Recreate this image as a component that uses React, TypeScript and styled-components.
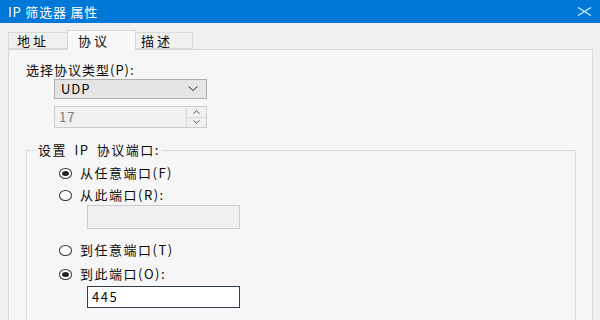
import React from "react";
import styled, { createGlobalStyle } from "styled-components";

const Global = createGlobalStyle`
  html, body { margin: 0; padding: 0; background: #f0f0f0; }
  body { font-family: "Noto Sans CJK SC", "Noto Sans", sans-serif; }
`;

const Window = styled.div`
  width: 600px;
  height: 320px;
  overflow: hidden;
  background: #f0f0f0;
  display: flex;
  flex-direction: column;
  font-size: 13px;
  line-height: 16px;
  color: #0a0a0a;
`;

const TitleBar = styled.div`
  flex: none;
  height: 23px;
  background: #0078d7;
  display: flex;
  align-items: center;
  justify-content: space-between;
  padding: 0 8px 0 8px;
  color: #ffffff;
`;

const Title = styled.span`
  letter-spacing: 0.8px;
`;

const CloseIcon = styled.svg`
  display: block;
`;

const Body = styled.div`
  flex: 1;
  min-height: 0;
  display: flex;
  flex-direction: column;
  padding: 7px 7px 0 8px;
`;

const TabStrip = styled.div`
  display: flex;
  align-items: flex-end;
  height: 19px;
`;

const Tab = styled.div<{ $active?: boolean; $w: number; $pad: number }>`
  position: relative;
  z-index: ${(p) => (p.$active ? 1 : 0)};
  box-sizing: border-box;
  width: ${(p) => p.$w}px;
  height: ${(p) => (p.$active ? 20 : 17)}px;
  margin-bottom: ${(p) => (p.$active ? -1 : 0)}px;
  margin-left: -1px;
  padding-left: ${(p) => p.$pad}px;
  border: 1px solid #d9d9d9;
  border-bottom: ${(p) => (p.$active ? "none" : "1px solid #d9d9d9")};
  background: ${(p) => (p.$active ? "#f8f8f8" : "#f0f0f0")};
  display: flex;
  align-items: center;
  letter-spacing: 3px;
  &:first-child { margin-left: 0; }
`;

const Panel = styled.div`
  flex: 1;
  box-sizing: border-box;
  border: 1px solid #d9d9d9;
  border-bottom: none;
  background: #f6f6f6;
  padding: 12px 0 0 17px;
  display: flex;
  flex-direction: column;
  align-items: flex-start;
`;

const Label = styled.span`
  letter-spacing: 1px;
`;

const Combo = styled.div`
  box-sizing: border-box;
  margin: 1px 0 0 28px;
  width: 153px;
  height: 20px;
  border: 1px solid #adadad;
  background: #e5e5e5;
  display: flex;
  align-items: center;
  justify-content: space-between;
  padding: 0 8px 0 6px;
  letter-spacing: 1px;
`;

const Spin = styled.div`
  box-sizing: border-box;
  margin: 7px 0 0 28px;
  width: 153px;
  height: 22px;
  border: 1px solid #cccccc;
  background: #f0f0f0;
  display: flex;
`;

const SpinValue = styled.span`
  flex: 1;
  padding-left: 4px;
  line-height: 20px;
  color: #7a7a7a;
  letter-spacing: 1px;
`;

const SpinButtons = styled.div`
  width: 19px;
  border-left: 1px solid #dadada;
  display: flex;
  flex-direction: column;
`;

const SpinBtn = styled.div`
  flex: 1;
  display: flex;
  align-items: center;
  justify-content: center;
  & + & { border-top: 1px solid #dadada; }
`;

const Group = styled.fieldset`
  box-sizing: border-box;
  margin: 14px 0 0 0;
  padding: 0 0 40px 0;
  width: 550px;
  border: 1px solid #dcdcdc;
  min-inline-size: 0;
`;

const Legend = styled.legend`
  margin-left: 9px;
  padding: 0 2px;
  line-height: 16px;
  letter-spacing: 1.5px;
  word-spacing: 3px;
`;

const GroupContent = styled.div`
  display: flex;
  flex-direction: column;
  align-items: flex-start;
  padding-left: 32px;
`;

const RadioRow = styled.div<{ $mt: number }>`
  display: flex;
  align-items: center;
  gap: 8px;
  height: 16px;
  margin-top: ${(p) => p.$mt}px;
  letter-spacing: 1.5px;
`;

const RadioMark = styled.span<{ $checked?: boolean }>`
  box-sizing: border-box;
  width: 13px;
  height: 11px;
  border: 1px solid #333333;
  border-radius: 50%;
  background: #ffffff;
  display: flex;
  align-items: center;
  justify-content: center;
  &::after {
    content: "";
    display: ${(p) => (p.$checked ? "block" : "none")};
    width: 7px;
    height: 5px;
    border-radius: 50%;
    background: #222222;
  }
`;

const TextBox = styled.div<{ $mt: number; $h: number; $enabled?: boolean }>`
  box-sizing: border-box;
  margin: ${(p) => p.$mt}px 0 0 28px;
  width: 153px;
  height: ${(p) => p.$h}px;
  border: 1px solid ${(p) => (p.$enabled ? "#2f3e4c" : "#cccccc")};
  background: ${(p) => (p.$enabled ? "#ffffff" : "#f0f0f0")};
  padding-left: 4px;
  display: flex;
  align-items: center;
  letter-spacing: 1.5px;
`;

const Chevron = () => (
  <svg width="10" height="6" viewBox="0 0 10 6">
    <polyline points="0.5,0.5 5,4.5 9.5,0.5" fill="none" stroke="#333" strokeWidth="1" />
  </svg>
);

const Caret = ({ up }: { up?: boolean }) => (
  <svg width="7" height="4" viewBox="0 0 7 4">
    {up ? (
      <polyline points="0.5,3.5 3.5,0.8 6.5,3.5" fill="none" stroke="#555" strokeWidth="1" />
    ) : (
      <polyline points="0.5,0.5 3.5,3.2 6.5,0.5" fill="none" stroke="#555" strokeWidth="1" />
    )}
  </svg>
);

export default function App() {
  return (
    <>
      <Global />
      <Window>
        <TitleBar>
          <Title>IP 筛选器 属性</Title>
          <CloseIcon width="15" height="9" viewBox="0 0 15 9">
            <line x1="1" y1="0.5" x2="14" y2="8.5" stroke="#dbeeff" strokeWidth="1.2" />
            <line x1="14" y1="0.5" x2="1" y2="8.5" stroke="#dbeeff" strokeWidth="1.2" />
          </CloseIcon>
        </TitleBar>
        <Body>
          <TabStrip>
            <Tab $w={60} $pad={8}>地址</Tab>
            <Tab $w={69} $pad={10} $active>协议</Tab>
            <Tab $w={58} $pad={5}>描述</Tab>
          </TabStrip>
          <Panel>
            <Label>选择协议类型(P):</Label>
            <Combo>
              <span>UDP</span>
              <Chevron />
            </Combo>
            <Spin>
              <SpinValue>17</SpinValue>
              <SpinButtons>
                <SpinBtn><Caret up /></SpinBtn>
                <SpinBtn><Caret /></SpinBtn>
              </SpinButtons>
            </Spin>
            <Group>
              <Legend>设置 IP 协议端口:</Legend>
              <GroupContent>
                <RadioRow $mt={7}>
                  <RadioMark $checked />
                  <span>从任意端口(F)</span>
                </RadioRow>
                <RadioRow $mt={6}>
                  <RadioMark />
                  <span>从此端口(R):</span>
                </RadioRow>
                <TextBox $mt={2} $h={24} />
                <RadioRow $mt={13}>
                  <RadioMark />
                  <span>到任意端口(T)</span>
                </RadioRow>
                <RadioRow $mt={8}>
                  <RadioMark $checked />
                  <span>到此端口(O):</span>
                </RadioRow>
                <TextBox $mt={4} $h={22} $enabled>445</TextBox>
              </GroupContent>
            </Group>
          </Panel>
        </Body>
      </Window>
    </>
  );
}
